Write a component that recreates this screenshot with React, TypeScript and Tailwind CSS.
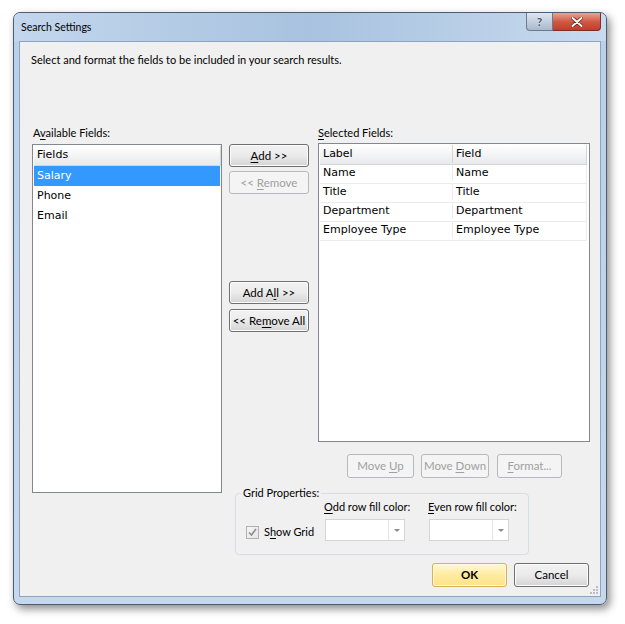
import React from "react"

const font = { fontFamily: 'Lato, "Noto Sans", sans-serif' }
const listFont = { fontFamily: '"DejaVu Sans", Verdana, sans-serif' }

const U = ({ children }: { children: React.ReactNode }) => (
  <span className="underline underline-offset-[2px] decoration-[1px]">{children}</span>
)

const Btn = ({
  children,
  disabled,
  className = "",
}: {
  children: React.ReactNode
  disabled?: boolean
  className?: string
}) => (
  <div
    className={`flex items-center justify-center whitespace-pre rounded-[3px] border text-[11.5px] ${
      disabled
        ? "border-[#b5b8bc] bg-[#f4f4f4] text-[#a0a0a0]"
        : "border-[#707070] bg-gradient-to-b from-[#f2f2f2] via-[#ebebeb] to-[#d4d4d4] text-black shadow-[inset_0_0_0_1px_#fcfcfc]"
    } ${className}`}
  >
    <span>{children}</span>
  </div>
)

const Combo = () => (
  <div className="flex h-[22px] w-[80px] border border-[#d2d4d8] bg-white">
    <div className="flex-1" />
    <div className="flex w-[16px] items-center justify-center border-l border-[#e3e5e8]">
      <div className="h-0 w-0 border-x-[3px] border-t-[3px] border-x-transparent border-t-[#8a8a8a]" />
    </div>
  </div>
)

const rows = ["Name", "Title", "Department", "Employee Type"]

export default function App() {
  return (
    <div className="h-[624px] w-[625px] bg-white pl-[13px] pt-[12px]" style={font}>
      <div className="flex h-[593px] w-[594px] flex-col rounded-[7px] border border-[#4e5d70] bg-gradient-to-b from-[#b9d0ea] to-[#c5d8ee] px-[5px] pb-[7px] shadow-[3px_4px_9px_rgba(0,0,0,0.45)]">
        {/* title bar */}
        <div className="relative -mx-[5px] flex h-[28px] shrink-0 items-center rounded-t-[6px] bg-gradient-to-r from-[#c3d6ed] via-[#a8c2df] to-[#c8daee] px-[7px]">
          <span className="pt-[1px] text-[10.5px] text-black">Search Settings</span>
          <div className="absolute right-[5px] top-0 flex">
            <div className="flex h-[18px] w-[27px] items-center justify-center rounded-bl-[4px] border border-t-0 border-[#6c7b8d] bg-gradient-to-b from-[#dfe7f1] via-[#c2cfdf] to-[#aab9cc]">
              <span className="text-[12px] font-bold leading-none text-[#4a5566]" style={{ textShadow: "0 0 2px #fff" }}>
                ?
              </span>
            </div>
            <div className="flex h-[18px] w-[48px] items-center justify-center rounded-br-[4px] border border-l-0 border-t-0 border-[#7a2f28] bg-gradient-to-b from-[#e8a493] via-[#cf5a45] to-[#c33b2b]">
              <svg width="12" height="10" viewBox="0 0 12 10">
                <path d="M1.5 1 L10.5 9 M10.5 1 L1.5 9" stroke="#5a1d16" strokeWidth="3.4" strokeLinecap="round" />
                <path d="M1.5 1 L10.5 9 M10.5 1 L1.5 9" stroke="#fff" strokeWidth="2" strokeLinecap="round" />
              </svg>
            </div>
          </div>
        </div>

        {/* client */}
        <div className="relative flex flex-1 flex-col border border-[#8ea3bd] bg-[#f0f0f0] text-[11px] text-black">
          <div className="pl-[11px] pt-[10px] leading-[16px]">
            Select and format the fields to be included in your search results.
          </div>

          <div className="mt-[57px] flex pl-[12px] pr-[9px]">
            {/* available fields */}
            <div className="flex w-[190px] flex-col">
              <div className="h-[16px] pl-[1px] leading-[16px]">
                A<U>v</U>ailable Fields:
              </div>
              <div className="mt-[3px] h-[349px] border border-[#828790] bg-white p-[1px]" style={listFont}>
                <div className="flex h-[20px] w-[187px] items-center border-b border-r border-[#d5d5d5] bg-gradient-to-b from-white to-[#e8e9eb] pb-[1px] pl-[3px]">
                  Fields
                </div>
                <div className="flex h-[20px] w-[186px] items-center bg-[#3399ff] pl-[3px] text-white">Salary</div>
                <div className="flex h-[20px] items-center pl-[3px]">Phone</div>
                <div className="flex h-[20px] items-center pl-[3px]">Email</div>
              </div>
            </div>

            {/* right area */}
            <div className="ml-[7px] flex flex-1 flex-col">
              <div className="flex">
                <div className="flex w-[80px] flex-col pt-[19px]">
                  <Btn className="h-[23px]">
                    <U>A</U>dd &gt;&gt;
                  </Btn>
                  <Btn disabled className="mt-[4px] h-[23px]">
                    &lt;&lt; <U>R</U>emove
                  </Btn>
                  <Btn className="mt-[87px] h-[23px]">
                    Add A<U>l</U>l &gt;&gt;
                  </Btn>
                  <Btn className="mt-[5px] h-[23px]">
                    &lt;&lt; Re<U>m</U>ove All
                  </Btn>
                </div>

                <div className="ml-[9px] flex flex-col">
                  <div className="h-[16px] leading-[16px]">
                    <U>S</U>elected Fields:
                  </div>
                  <div className="mt-[2px] h-[299px] w-[272px] border border-[#828790] bg-white p-[1px]" style={listFont}>
                    <div className="flex h-[20px] w-[267px] border-b border-r border-[#d5d5d5] bg-gradient-to-b from-white to-[#e8e9eb] pb-[1px]">
                      <div className="flex w-[133px] items-center border-r border-[#d5d5d5] pl-[3px]">Label</div>
                      <div className="flex flex-1 items-center pl-[3px]">Field</div>
                    </div>
                    {rows.map((r) => (
                      <div key={r} className="flex h-[19px] w-[267px] border-b border-r border-[#ececec] pb-[2px]">
                        <div className="flex w-[133px] items-center border-r border-[#ececec] pl-[3px]">{r}</div>
                        <div className="flex flex-1 items-center pl-[3px]">{r}</div>
                      </div>
                    ))}
                  </div>
                </div>
              </div>

              <div className="mt-[12px] flex pl-[118px]">
                <Btn disabled className="h-[24px] w-[67px]">
                  Move <U>U</U>p
                </Btn>
                <Btn disabled className="ml-[7px] h-[24px] w-[68px]">
                  Move <U>D</U>own
                </Btn>
                <Btn disabled className="ml-[8px] h-[24px] w-[65px]">
                  <U>F</U>ormat...
                </Btn>
              </div>

              <div className="relative ml-[6px] mt-[15px] flex h-[62px] w-[294px] whitespace-nowrap rounded-[4px] border border-[#d5dfe5] pl-[10px] pt-[5px]">
                <span className="absolute -top-[9px] left-[5px] bg-[#f0f0f0] px-[2px] leading-[16px]">Grid Properties:</span>
                <div className="flex w-[78px] items-center pt-[11px]">
                  <div className="flex h-[13px] w-[13px] shrink-0 items-center justify-center border border-[#b1b1b1] bg-gradient-to-br from-[#f4f4f4] to-[#e6e6e6]">
                    <svg width="9" height="9" viewBox="0 0 9 9">
                      <path d="M1 4.5 L3.5 7 L8 1" fill="none" stroke="#8d8d8d" strokeWidth="1.6" />
                    </svg>
                  </div>
                  <span className="ml-[5px]">
                    S<U>h</U>ow Grid
                  </span>
                </div>
                <div className="flex w-[104px] flex-col">
                  <div className="h-[16px] leading-[16px]">
                    <U>O</U>dd row fill color:
                  </div>
                  <div className="mt-[4px] pl-[1px]">
                    <Combo />
                  </div>
                </div>
                <div className="flex flex-col">
                  <div className="h-[16px] leading-[16px]">
                    <U>E</U>ven row fill color:
                  </div>
                  <div className="mt-[4px] pl-[1px]">
                    <Combo />
                  </div>
                </div>
              </div>

              <div className="mt-[8px] flex justify-end pr-[2px]">
                <div className="flex h-[24px] w-[75px] items-center justify-center rounded-[3px] border border-[#d9b24c] bg-gradient-to-b from-[#fff8d6] via-[#ffea9e] to-[#fde38a] text-[11.5px] font-bold shadow-[inset_0_0_0_1px_#fffbe6]">
                  OK
                </div>
                <Btn className="ml-[7px] h-[24px] w-[75px]">Cancel</Btn>
              </div>
            </div>
          </div>

          {/* resize grip */}
          <div className="absolute bottom-[2px] right-[2px] grid grid-cols-3 gap-[1px]">
            {[0, 0, 1, 0, 1, 1, 1, 1, 1].map((v, i) => (
              <div key={i} className={`h-[2px] w-[2px] ${v ? "bg-[#b9bec6]" : ""}`} />
            ))}
          </div>
        </div>
      </div>
    </div>
  )
}
